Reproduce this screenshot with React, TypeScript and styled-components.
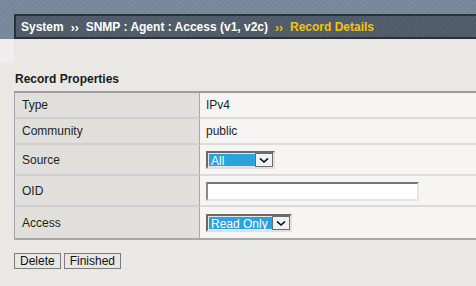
import React from "react";
import styled, { createGlobalStyle } from "styled-components";

const Global = createGlobalStyle`
  html, body { margin: 0; padding: 0; }
  body {
    background: #e9e8e4;
    font-family: "Liberation Sans", Arial, sans-serif;
    font-size: 12px;
    color: #1e1e1e;
    width: 476px;
    height: 286px;
    overflow: hidden;
  }
`;

const Header = styled.div`
  padding: 14px 0 0 14px;
  background: repeating-linear-gradient(
    -45deg,
    #75869a 0px,
    #75869a 2px,
    #7b8c9f 2px,
    #7b8c9f 4px
  );
`;

const Crumbs = styled.div`
  height: 21px;
  border: 2px solid #2e3034;
  border-right: none;
  background: repeating-linear-gradient(
    -45deg,
    #4e5a68 0px,
    #4e5a68 2px,
    #535f6d 2px,
    #535f6d 4px
  );
  display: flex;
  align-items: center;
  padding-left: 5px;
  font-weight: bold;
  font-size: 12px;
  color: #ffffff;
  white-space: nowrap;
`;

const Crumb = styled.span<{ $current?: boolean }>`
  color: ${(p) => (p.$current ? "#f5c400" : "#ffffff")};
`;

const Sep = styled.span<{ $current?: boolean }>`
  color: ${(p) => (p.$current ? "#f5c400" : "#ffffff")};
  font-size: 12px;
  margin: 2px 7px 0 7px;
  letter-spacing: 0px;
`;

const Body = styled.div`
  display: flex;
`;

const Side = styled.div`
  width: 14px;
  flex: none;
  height: 24px;
  background: #efeeec;
`;

const Main = styled.div`
  flex: 1;
  padding-top: 33px;
`;

const Title = styled.div`
  font-weight: bold;
  font-size: 12px;
  margin-left: 1px;
  height: 20px;
  line-height: 14px;
  color: #1a1a1a;
`;

const Table = styled.div`
  border-top: 2px solid #9d9d9d;
  border-bottom: 2px solid #a8a8a8;
  border-left: 1px solid #a5a5a5;
  display: grid;
  grid-template-columns: 185px 1fr;
  margin-top: -1px;
`;

const Label = styled.div<{ $h: number; $last?: boolean }>`
  height: ${(p) => p.$h}px;
  background: #e0dfdb;
  border-right: 1px solid #a9a9a9;
  border-bottom: ${(p) => (p.$last ? "none" : "2px solid #cfcfcd")};
  display: flex;
  align-items: center;
  padding-left: 7px;
`;

const Value = styled.div<{ $h: number; $last?: boolean }>`
  height: ${(p) => p.$h}px;
  background: #f6f5f3;
  border-bottom: ${(p) => (p.$last ? "none" : "2px solid #dcdcda")};
  display: flex;
  align-items: center;
  padding-left: 6px;
`;

const SelectBox = styled.div<{ $w: number }>`
  width: ${(p) => p.$w}px;
  height: 18px;
  box-sizing: border-box;
  border-top: 2px solid #6a6a6a;
  border-left: 2px solid #6a6a6a;
  border-right: 2px solid #e0e0e0;
  border-bottom: 2px solid #e0e0e0;
  background: #e6e6e6;
  display: flex;
  align-items: stretch;
  padding: 1px 0 0 1px;
  margin-top: 1px;
`;

const SelectText = styled.div`
  flex: 1;
  background: #2aa3dd;
  color: #ffffff;
  font-size: 12px;
  line-height: 14px;
  padding-left: 2px;
  margin-bottom: 1px;
`;

const SelectBtn = styled.div`
  width: 18px;
  box-sizing: border-box;
  border: 1px solid #6d6d6d;
  background: #f2f2f2;
  display: flex;
  align-items: center;
  justify-content: center;
  margin-top: -1px;
`;

const TextInput = styled.div`
  width: 213px;
  height: 19px;
  box-sizing: border-box;
  border-top: 2px solid #777;
  border-left: 2px solid #8a8a8a;
  border-right: 2px solid #e6e6e6;
  border-bottom: 2px solid #e6e6e6;
  background: #ffffff;
  margin-top: 1px;
`;

const Buttons = styled.div`
  display: flex;
  gap: 3px;
  margin-top: 13px;
`;

const Button = styled.button`
  height: 16px;
  box-sizing: border-box;
  border: 1px solid #7d7d7d;
  background: #e7e7e7;
  font-family: "Liberation Sans", Arial, sans-serif;
  font-size: 12px;
  color: #111;
  padding: 0 5px;
  line-height: 13px;
  margin: 0;
`;

const Chevron = () => (
  <svg width="10" height="7" viewBox="0 0 10 7">
    <path d="M1 1.5 L5 5 L9 1.5" fill="none" stroke="#000" strokeWidth="1.6" />
  </svg>
);

const FakeSelect = ({ w, text }: { w: number; text: string }) => (
  <SelectBox $w={w}>
    <SelectText>{text}</SelectText>
    <SelectBtn>
      <Chevron />
    </SelectBtn>
  </SelectBox>
);

export default function App() {
  return (
    <>
      <Global />
      <Header>
        <Crumbs>
          <Crumb>System</Crumb>
          <Sep>››</Sep>
          <Crumb>SNMP : Agent : Access (v1, v2c)</Crumb>
          <Sep $current>››</Sep>
          <Crumb $current>Record Details</Crumb>
        </Crumbs>
      </Header>
      <Body>
        <Side />
        <Main>
          <Title>Record Properties</Title>
          <Table>
            <Label $h={24}>Type</Label>
            <Value $h={24}>IPv4</Value>
            <Label $h={24}>Community</Label>
            <Value $h={24}>public</Value>
            <Label $h={29}>Source</Label>
            <Value $h={29}>
              <FakeSelect w={69} text="All" />
            </Value>
            <Label $h={29}>OID</Label>
            <Value $h={29}>
              <TextInput />
            </Value>
            <Label $h={31} $last>Access</Label>
            <Value $h={31} $last>
              <FakeSelect w={86} text="Read Only" />
            </Value>
          </Table>
          <Buttons>
            <Button>Delete</Button>
            <Button>Finished</Button>
          </Buttons>
        </Main>
      </Body>
    </>
  );
}
